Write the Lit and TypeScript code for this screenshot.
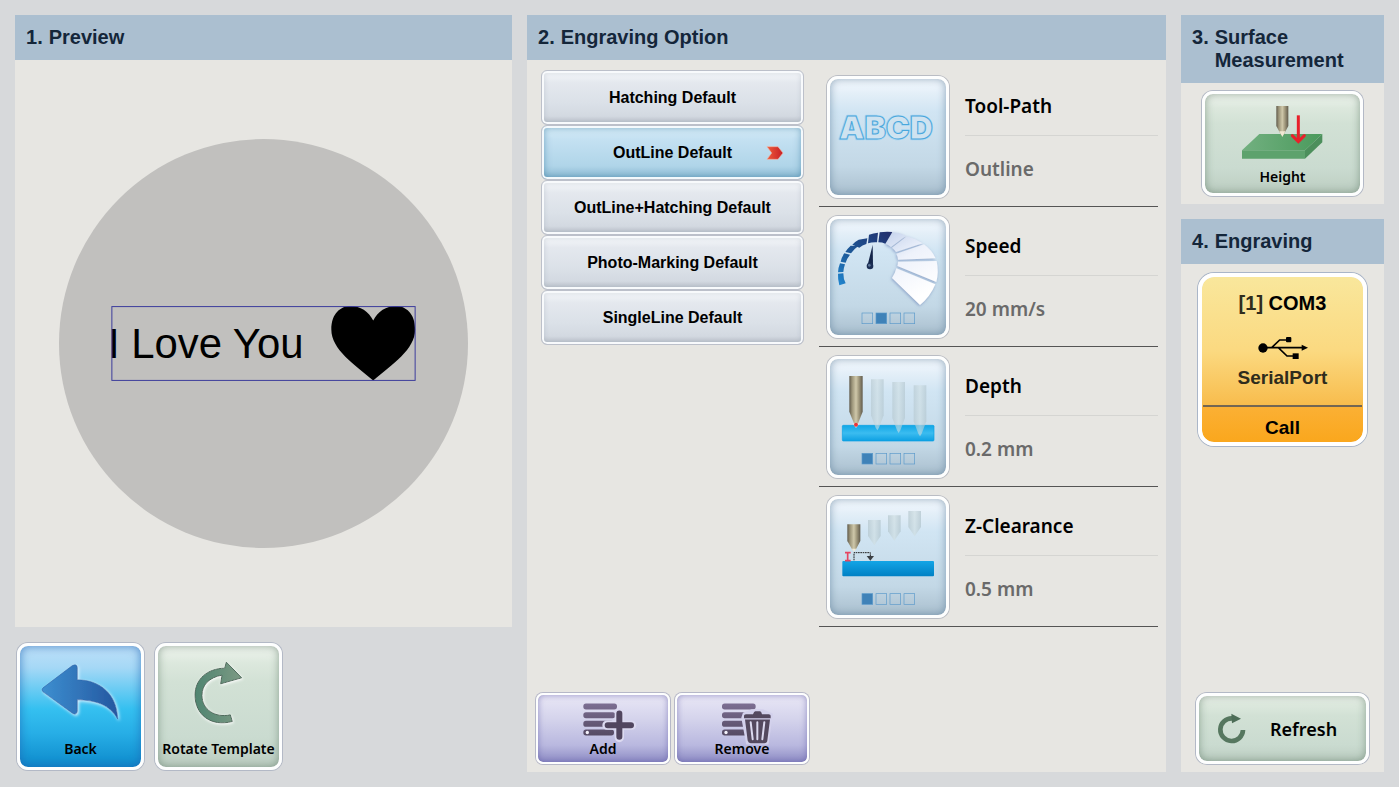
import { LitElement, html, svg, css } from "lit";
import { customElement, state } from "lit/decorators.js";
import { classMap } from "lit/directives/class-map.js";

const levels = (active: number) =>
  [0, 1, 2, 3].map(
    (i) => svg`<rect x=${141 + i * 42} y="322" width="32" height="32" stroke="#5a9acb" stroke-width="2"
      fill=${i === active ? "#3f82b8" : "none"} />`
  );

const toolPathIcon = html`
  <svg class="fill" viewBox="45 42 348 348" aria-hidden="true">
    <text x="72" y="222" font-family="Inter" font-weight="900" font-size="96"
      fill="#d3e7f3" stroke="#9ed3f2" stroke-width="8" stroke-linejoin="round" opacity="0.7">ABCD</text>
    <text x="72" y="222" font-family="Inter" font-weight="900" font-size="96"
      fill="#cfe3f0" stroke="#4aa7dc" stroke-width="3">ABCD</text>
  </svg>`;

const speedIcon = html`
  <svg class="fill" viewBox="45 40 348 348" aria-hidden="true">
    <defs>
      <linearGradient id="dial" x1="70" y1="237" x2="230" y2="80" gradientUnits="userSpaceOnUse">
        <stop offset="0" stop-color="#2186cf" /><stop offset="0.35" stop-color="#1c5c9c" /><stop offset="1" stop-color="#232f6c" />
      </linearGradient>
      <linearGradient id="fan" x1="215" y1="90" x2="320" y2="270" gradientUnits="userSpaceOnUse">
        <stop offset="0" stop-color="#c9d6ee" /><stop offset="0.4" stop-color="#eef2fb" /><stop offset="1" stop-color="#ffffff" />
      </linearGradient>
      <filter id="fanShade" x="-20%" y="-20%" width="140%" height="140%">
        <feDropShadow dx="-2" dy="3" stdDeviation="4" flood-color="#6e86b8" flood-opacity="0.7" />
      </filter>
    </defs>
    <g fill="url(#fan)" filter="url(#fanShade)">
      <path d="M234 80Q254 81 273 90L228 124Q219 117 211 114Z" />
      <path d="M276 92Q303 99 323 113L243 139Q238 131 231 126Z" />
      <path d="M327 116Q352 135 362 158L249 162Q248 152 244 144Z" />
      <path d="M365 166Q372 198 364 229L247 181Q249 174 249 168Z" />
      <path d="M361 236Q346 273 315 298L231 217Q240 204 244 188Z" />
    </g>
    <g fill="url(#dial)">
      <path d="M69 204L85 203Q85 221 92 233L73 239Q68 220 69 204Z" />
      <path d="M75 173L90 176Q86 187 85 199L69 200Q70 185 75 173Z" />
      <path d="M88 143L105 147Q96 158 92 171L77 168Q80 154 88 143Z" />
      <path d="M107 120L130 121Q117 130 108 143L91 139Q98 128 107 120Z" />
      <path d="M131 102L157 98L154 115Q142 119 133 126L112 117Q121 107 131 102Z" />
      <path d="M162 87Q175 83 189 81L186 110Q172 109 159 113Z" />
      <path d="M194 80Q213 77 232 79L211 114Q202 110 190 110Z" />
    </g>
    <path d="M173 117L174 178H158Z" fill="#15264a" />
    <circle cx="165" cy="181" r="10" fill="#1c2f55" /><circle cx="163" cy="179" r="4" fill="#60789a" />
    ${levels(1)}
  </svg>`;

const bitGradient = svg`
  <linearGradient id="bit"><stop offset="0" stop-color="#5f594a" /><stop offset="0.2" stop-color="#9a9378" />
    <stop offset="0.5" stop-color="#cfc8aa" /><stop offset="0.7" stop-color="#a49c80" /><stop offset="1" stop-color="#615b4c" /></linearGradient>
  <linearGradient id="ghost"><stop offset="0" stop-color="#b4c6cd" /><stop offset="0.5" stop-color="#d0dfe3" />
    <stop offset="1" stop-color="#b0c3cb" /></linearGradient>`;

const longBit = (x: number, y: number) =>
  svg`<path d="M${x} ${y}h38v108l-14 37l-5 8l-5-8l-14-37z" fill="url(#ghost)" opacity="0.6" />`;
const shortBit = (x: number, y: number) =>
  svg`<path d="M${x} ${y}h38v48l-19 28l-19-28z" fill="url(#ghost)" opacity="0.7" />`;

const depthIcon = html`
  <svg class="fill" viewBox="45 39 348 348" aria-hidden="true">
    <defs>
      ${bitGradient}
      <linearGradient id="slab" x2="0" y2="1"><stop offset="0" stop-color="#11a7e6" /><stop offset="0.5" stop-color="#3bbcf0" /><stop offset="1" stop-color="#0da0e2" /></linearGradient>
    </defs>
    <rect x="82" y="238" width="275" height="47" rx="3" fill="url(#slab)" stroke="#0aa0e4" stroke-width="2" />
    ${longBit(168, 100)}${longBit(232, 108)}${longBit(296, 118)}
    <path d="M103 90h40v107l-15 38h-10l-15-38z" fill="url(#bit)" />
    <path d="M112 232h22l-11 14z" fill="#e9e4e0" /><circle cx="123" cy="236" r="6" fill="#e8353a" />
    ${levels(0)}
  </svg>`;

const clearanceIcon = html`
  <svg class="fill" viewBox="45 38 348 348" aria-hidden="true">
    <defs>
      ${bitGradient}
      <linearGradient id="block" x2="0" y2="1"><stop offset="0" stop-color="#13a5e6" /><stop offset="1" stop-color="#0080c4" /></linearGradient>
    </defs>
    <rect x="82" y="224" width="275" height="46" rx="3" fill="url(#block)" />
    ${shortBit(159, 101)}${shortBit(219, 87)}${shortBit(280, 74)}
    <path d="M97 114h39v50l-14 26h-10l-15-26z" fill="url(#bit)" /><path d="M110 187h14l-7 9z" fill="#f0ead8" />
    <path d="M117 222V199H166V210" fill="none" stroke="#222" stroke-width="3" stroke-dasharray="5 2" />
    <path d="M155 209h22l-11 14z" fill="#3b3f44" />
    <path d="M90 199h17M90 223h17M98 199v24" stroke="#e64560" stroke-width="5" />
    ${levels(0)}
  </svg>`;

const backIcon = html`
  <svg class="pad" viewBox="60 48 363 276" aria-hidden="true">
    <defs>
      <linearGradient id="arrow"><stop offset="0" stop-color="#3d8fd0" /><stop offset="1" stop-color="#2457a0" /></linearGradient>
      <filter id="glow" x="-20%" y="-20%" width="140%" height="140%"><feDropShadow dx="4" dy="4" stdDeviation="5" flood-color="#d6f0ff" /></filter>
    </defs>
    <path d="M129 172L216 106Q231 98 232 112V148C300 148 352 192 353 266C330 222 285 209 232 208V242Q230 256 217 248L129 184Q123 178 129 172Z"
      fill="url(#arrow)" stroke="#2a68ad" stroke-width="2" filter="url(#glow)" />
  </svg>`;

const rotateIcon = html`
  <svg class="pad" viewBox="474 48 363 276" aria-hidden="true">
    <defs>
      <linearGradient id="turn"><stop offset="0" stop-color="#4f8470" /><stop offset="1" stop-color="#7c9a84" /></linearGradient>
      <filter id="soft" x="-20%" y="-20%" width="140%" height="140%"><feDropShadow dx="2" dy="3" stdDeviation="4" flood-color="#ffffff" /></filter>
    </defs>
    <path d="M679 95L725 142L662 160L666 134C627 141 606 163 606 195C606 237 645 263 691 253L697 273C632 290 585 252 585 194C585 146 622 114 674 113Z"
      fill="url(#turn)" stroke="#4d6a5b" stroke-width="3" stroke-linejoin="round" filter="url(#soft)" />
  </svg>`;

const stackRows = (x: number) => svg`
  <g fill="url(#ink)">
    <rect x=${x} y="69" width="101" height="18" rx="8" />
    <rect x=${x} y="95" width="96" height="18" rx="8" />
    <rect x=${x} y="121" width="92" height="18" rx="8" />
    <rect x=${x} y="147" width="92" height="18" rx="8" />
  </g>
  <circle cx=${x + 12} cy="156" r="5" fill="#f3f1fa" />`;

const inkGradient = svg`
  <linearGradient id="ink" x1="0" y1="69" x2="0" y2="188" gradientUnits="userSpaceOnUse">
    <stop offset="0" stop-color="#7c6e92" /><stop offset="1" stop-color="#4c4258" /></linearGradient>`;

const addIcon = html`
  <svg class="strip" viewBox="54 45 390 129" aria-hidden="true">
    <defs>${inkGradient}</defs>
    ${stackRows(190)}
    <path d="M298 97V171M261 134H335" stroke="#dcdaf0" stroke-width="28" stroke-linecap="round" />
    <path d="M298 99V169M263 134H333" stroke="#51465f" stroke-width="18" stroke-linecap="round" />
  </svg>`;

const removeIcon = html`
  <svg class="strip" viewBox="471 45 390 129" aria-hidden="true">
    <defs>${inkGradient}</defs>
    ${stackRows(606)}
    <path d="M672 100L696 90H728L755 102L752 120L742 188H682L668 112Z" fill="#d3d1ec" stroke="#d3d1ec" stroke-width="8" />
    <path d="M672 113V106Q672 101 678 101H699Q702 92 706 92H720Q724 92 726 101H746Q752 101 752 106V113Z" fill="#54495f" />
    <path d="M675 117H750L742 180Q741 188 733 188H692Q685 188 683 180Z" fill="#54495f" />
    <path d="M692 125L698 176M712 125V176M733 125L727 176" stroke="#dcdaf0" stroke-width="6" stroke-linecap="round" />
  </svg>`;

const heightIcon = html`
  <svg class="wide" viewBox="90 282 465 219" aria-hidden="true">
    <defs>
      ${bitGradient}
      <linearGradient id="plate"><stop offset="0" stop-color="#72b080" /><stop offset="1" stop-color="#4a9a5c" /></linearGradient>
    </defs>
    <path d="M201 451L253 402H442L390 451Z" fill="url(#plate)" />
    <path d="M201 451H390V476H201Z" fill="#5da26d" /><path d="M390 451L442 402V427L390 476Z" fill="#4c8f5c" />
    <path d="M304 318h36v60l-14 26h-8l-14-26z" fill="url(#bit)" /><path d="M313 394h18l-9 17z" fill="#f0e8d2" />
    <path d="M370 346V422" stroke="#e8202a" stroke-width="9" />
    <path d="M352 407L370 425L388 407" fill="none" stroke="#e8202a" stroke-width="9" stroke-linecap="round" />
  </svg>`;

const usbIcon = html`
  <svg class="usb" viewBox="247 378 150 72" aria-hidden="true">
    <circle cx="262" cy="414" r="14" /><path d="M378 404L397 413L378 422Z" />
    <path d="M262 413H380M288 413L312 390H334M308 413L334 438H354" fill="none" stroke="#000" stroke-width="5" />
    <rect x="331" y="381" width="16" height="16" rx="3" /><rect x="351" y="430" width="18" height="17" />
  </svg>`;

const refreshIcon = html`
  <svg class="reload" viewBox="125 99 90 96" aria-hidden="true">
    <path d="M203 150A34 34 0 1 1 171 115" fill="none" stroke="#56775f" stroke-width="14" />
    <path d="M168 101L197 116L170 130Z" fill="#4d6d57" />
  </svg>`;

interface Setting { title: string; value: string; icon: unknown; }

@customElement("app-root")
export class AppRoot extends LitElement {
  static styles = css`
    :host {
      display: grid;
      grid-template-columns: 497fr 639fr 203px;
      gap: 15px;
      box-sizing: border-box;
      min-height: 100vh;
      padding: 15px;
      background: #d7d9db;
      font-family: "Liberation Sans", Arial, sans-serif;
      color: #000;
    }
    * { box-sizing: border-box; }
    .column { display: flex; flex-direction: column; gap: 15px; min-width: 0; }
    .panel { display: flex; flex-direction: column; background: #e7e6e2; min-width: 0; }
    .grow { flex: 1; }
    h2 {
      display: flex;
      gap: 6px;
      margin: 0;
      padding: 11px;
      background: #abbfd0;
      color: #14263a;
      font-size: 20px;
      font-weight: 700;
      line-height: 23px;
    }
    .canvas { flex: 1; display: flex; align-items: center; justify-content: center; padding: 0 44px; }
    .canvas svg { width: 100%; overflow: visible; }
    .actions { display: flex; gap: 11px; padding: 1px 2px 2px; }

    button { margin: 0; padding: 0; font: inherit; color: inherit; cursor: pointer; }
    svg { display: block; }
    .key {
      display: flex;
      flex-direction: column;
      align-items: center;
      border: 3px solid #fdfefe;
      border-radius: 11px;
      background-clip: padding-box;
      font-family: "Noto Sans", "Open Sans", sans-serif;
      font-size: 14px;
      font-weight: 600;
      line-height: 20px;
      white-space: nowrap;
    }
    .square { width: 127px; height: 127px; }
    .blue {
      background: linear-gradient(#bfe0f8 0%, #a5d8f6 18%, #35c0f0 52%, #27aee6 72%, #0d8acb 100%) padding-box;
      box-shadow: 0 0 0 1px #b3b9c6, inset 0 0 8px 1px rgba(30, 100, 180, 0.6);
    }
    .green {
      background: linear-gradient(#f0f5ef 0%, #dce8dd 14%, #d2e1d5 30%, #cadbd0 75%, #bccdc1 100%) padding-box;
      box-shadow: 0 0 0 1px #b3b9c6, inset 0 0 9px rgba(80, 110, 90, 0.55);
    }
    .tile {
      flex: none;
      width: 122px;
      height: 122px;
      background: linear-gradient(#f7fbff 0%, #e4eff8 12%, #d1e5f3 28%, #c3d8e6 75%, #aabfce 100%) padding-box;
      box-shadow: 0 0 0 1px #babdc4, inset 0 0 9px rgba(80, 115, 145, 0.6);
    }
    .fill { width: 116px; height: 116px; }
    .pad { width: 121px; height: 93px; }
    .wide { width: 155px; height: 73px; }
    .strip { width: 130px; height: 44px; overflow: visible; }

    .options { display: grid; grid-template-columns: 263fr 339fr; gap: 15px; flex: 1; padding: 7px 8px 0 14px; }
    .list { margin: 0; padding: 3px 0 0; list-style: none; }
    .option {
      position: relative;
      width: 100%;
      height: 55px;
      border: 1px solid #bcc0ca;
      border-radius: 6px;
      background: linear-gradient(#f8fafc 0%, #e4e8ee 22%, #dbe1e8 60%, #d3d9e1 85%, #b9c0c8 100%);
      box-shadow: inset 0 0 0 2px #f8fafc, inset 0 0 5px 2px rgba(120, 130, 150, 0.25);
      font-size: 16px;
      font-weight: 700;
    }
    .chosen {
      background: linear-gradient(#dcf0fa 0%, #c4e1f2 25%, #b0d5e9 75%, #8dbbd3 100%);
      box-shadow: inset 0 0 0 2px #f4f9fc, inset 0 0 7px 2px rgba(40, 110, 150, 0.5);
    }
    .marker { position: absolute; right: 19px; top: 20px; width: 18px; height: 14px; }
    .settings { margin: 0; }
    .setting { display: flex; gap: 16px; height: 140px; padding: 9px 0 8px 8px; border-bottom: 1px solid #555; }
    .facts { flex: 1; font-family: "Noto Sans", "Open Sans", sans-serif; font-size: 19px; font-weight: 600; line-height: 26px; }
    .name { margin: 0; padding: 17px 0 16px; border-bottom: 1px solid #d5d5d2; }
    .value { margin: 0; padding-top: 20px; color: #6a6a6a; }

    .tools { display: flex; gap: 5px; padding: 0 9px 8px; }
    .violet {
      width: 134px;
      height: 71px;
      border-width: 2px;
      border-radius: 7px;
      background: linear-gradient(#e9e7f6 0%, #d5d4ec 35%, #b9b8df 75%, #8d8bc4 100%) padding-box;
      box-shadow: 0 0 0 1px #b6b8c8, inset 0 0 6px rgba(95, 90, 165, 0.6);
    }

    .measure { padding: 8px 21px; }
    .measure .key { width: 100%; height: 105px; }
    .engrave { flex: 1; display: flex; flex-direction: column; justify-content: space-between; padding: 9px 15px 8px; }
    .port {
      display: flex;
      flex-direction: column;
      align-items: center;
      height: 173px;
      margin: 0 2px;
      padding: 14px 1px 0;
      border: 4px solid #fff;
      border-radius: 16px;
      background: linear-gradient(#f9e79c 0%, #fbd980 45%, #f8bc4c 78%, #fbb034 79%, #faa71d 100%) padding-box;
      box-shadow: 0 0 0 1px #aab6c8;
      font-size: 20px;
      font-weight: 700;
      line-height: 24px;
    }
    .dim { color: #2f2c1c; }
    .usb { width: 50px; height: 24px; margin: 21px 0 6px; }
    .serial { color: #2f2c1c; font-size: 19px; }
    .call { width: 100%; margin-top: 15px; padding-top: 9px; border-top: 2px solid #736653; font-size: 19px; }
    .refresh { flex-direction: row; gap: 23px; height: 71px; padding-left: 18px; font-size: 18px; }
    .reload { width: 30px; height: 32px; }
  `;

  @state() private selected = 1;

  private options = [
    "Hatching Default",
    "OutLine Default",
    "OutLine+Hatching Default",
    "Photo-Marking Default",
    "SingleLine Default",
  ];

  private settings: Setting[] = [
    { title: "Tool-Path", value: "Outline", icon: toolPathIcon },
    { title: "Speed", value: "20 mm/s", icon: speedIcon },
    { title: "Depth", value: "0.2 mm", icon: depthIcon },
    { title: "Z-Clearance", value: "0.5 mm", icon: clearanceIcon },
  ];

  private heading(step: number, title: unknown) {
    return html`<h2><span>${step}.</span><span>${title}</span></h2>`;
  }

  private renderOption(name: string, index: number) {
    const on = index === this.selected;
    return html`<li>
      <button class=${classMap({ option: true, chosen: on })} aria-pressed=${on ? "true" : "false"}
        @click=${() => (this.selected = index)}>
        ${name}
        ${on
          ? html`<svg class="marker" viewBox="0 0 54 42" aria-hidden="true">
              <defs><linearGradient id="flag"><stop offset="0" stop-color="#ef5a3a" /><stop offset="1" stop-color="#c62026" /></linearGradient></defs>
              <path d="M3 2H36L51 21L36 40H3L17 21Z" fill="url(#flag)" stroke="#f0b5a4" stroke-width="2" />
            </svg>`
          : null}
      </button>
    </li>`;
  }

  render() {
    return html`
      <div class="column">
        <section class="panel grow">
          ${this.heading(1, "Preview")}
          <div class="canvas">
            <svg viewBox="0 0 410 410" role="img" aria-label="Engraving preview">
              <circle cx="205" cy="205" r="205" fill="#c1c0be" />
              <text x="49" y="220" font-size="42" fill="#000">I Love You</text>
              <path d="M315 242C296 226 273 211 273 191C273 160 306 162 315 182C324 162 357 160 357 191C357 211 334 226 315 242Z" />
              <rect x="53" y="168" width="304" height="74" fill="none" stroke="#3c3c9c" />
            </svg>
          </div>
        </section>
        <div class="actions">
          <button class="key square blue">${backIcon}<span>Back</span></button>
          <button class="key square green">${rotateIcon}<span>Rotate Template</span></button>
        </div>
      </div>

      <section class="panel">
        ${this.heading(2, "Engraving Option")}
        <div class="options">
          <ul class="list">${this.options.map((name, i) => this.renderOption(name, i))}</ul>
          <dl class="settings">
            ${this.settings.map(
              (s) => html`<div class="setting">
                <button class="key tile" aria-label=${s.title}>${s.icon}</button>
                <div class="facts"><dt class="name">${s.title}</dt><dd class="value">${s.value}</dd></div>
              </div>`
            )}
          </dl>
        </div>
        <div class="tools">
          <button class="key violet">${addIcon}<span>Add</span></button>
          <button class="key violet">${removeIcon}<span>Remove</span></button>
        </div>
      </section>

      <div class="column">
        <section class="panel">
          ${this.heading(3, html`Surface<br />Measurement`)}
          <div class="measure"><button class="key green">${heightIcon}<span>Height</span></button></div>
        </section>
        <section class="panel grow">
          ${this.heading(4, "Engraving")}
          <div class="engrave">
            <button class="port">
              <span><span class="dim">[1]</span> COM3</span>
              ${usbIcon}
              <span class="serial">SerialPort</span>
              <span class="call">Call</span>
            </button>
            <button class="key green refresh">${refreshIcon}<span>Refresh</span></button>
          </div>
        </section>
      </div>
    `;
  }
}
